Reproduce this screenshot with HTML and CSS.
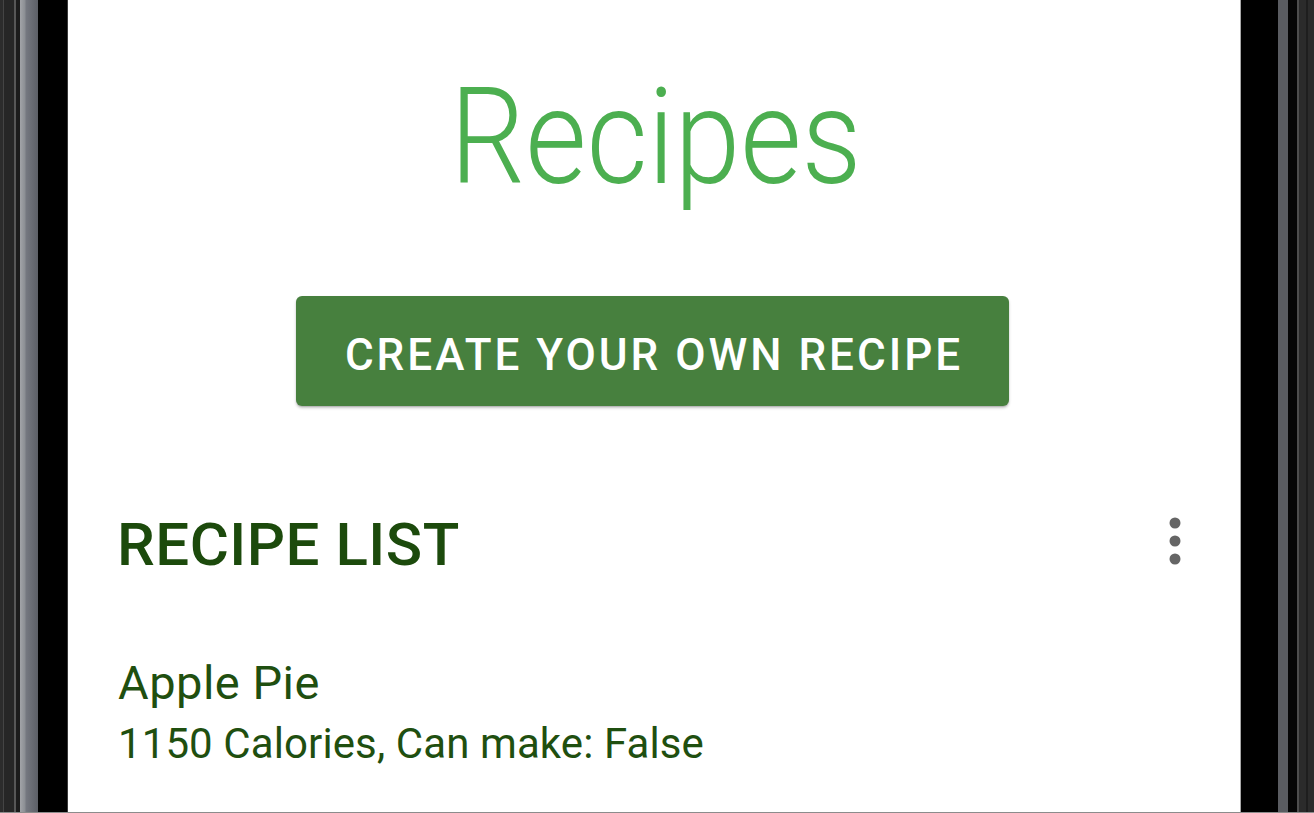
FILE: index.html
```html
<!DOCTYPE html>
<html lang="en">
<head>
<meta charset="utf-8">
<title>Recipes</title>
<link rel="stylesheet" href="styles.css">
</head>
<body>
<div class="device">
  <div class="bezel bezel-left"></div>
  <main class="screen">
    <h1 class="title">Recipes</h1>
    <div class="actions">
      <button class="create-btn" type="button">Create your own recipe</button>
    </div>
    <div class="list-header">
      <h2 class="list-title">RECIPE LIST</h2>
      <button class="menu-btn" type="button" aria-label="More options">
        <svg width="14" height="50" viewBox="0 0 14 50" aria-hidden="true">
          <circle cx="7" cy="7" r="5.5" fill="#656565"/>
          <circle cx="7" cy="25" r="5.5" fill="#656565"/>
          <circle cx="7" cy="43" r="5.5" fill="#656565"/>
        </svg>
      </button>
    </div>
    <ul class="recipe-list">
      <li class="recipe">
        <div class="recipe-name">Apple Pie</div>
        <div class="recipe-meta">1150 Calories, Can make: False</div>
      </li>
    </ul>
  </main>
  <div class="bezel bezel-right"></div>
</div>
</body>
</html>
```

FILE: styles.css
```css
* { box-sizing: border-box; }

html, body {
  margin: 0;
  padding: 0;
  background: #000;
}

body {
  width: 1314px;
  height: 813px;
  overflow: hidden;
  font-family: Roboto, "Noto Sans", "Liberation Sans", sans-serif;
}

.device {
  display: flex;
  height: 813px;
  border-bottom: 1px solid #8c8c8c;
}

.bezel { flex: none; height: 100%; }

.bezel-left {
  width: 68px;
  background: linear-gradient(to right,
    #2c2c2c 0, #2c2c2c 3px,
    #444 3px, #444 4px,
    #262626 4px, #262626 14px,
    #565656 14px, #565656 16px,
    #1b1b1b 16px, #1b1b1b 20px,
    #a2a4a8 20px, #8b8e93 25px,
    #757880 26px, #5c5f66 38px,
    #000 38px, #000 67px,
    #3a3a3a 67px, #3a3a3a 68px);
}

.bezel-right {
  width: 74px;
  background: linear-gradient(to right,
    #a8a8a8 0, #a8a8a8 1px,
    #000 1px, #000 38px,
    #5a5c61 38px, #5a5c61 48px,
    #060606 48px, #060606 57px,
    #4e4e4e 57px, #4e4e4e 59px,
    #2b2b2b 59px, #2b2b2b 66px,
    #1e1e1e 66px, #1e1e1e 68px,
    #2b2b2b 68px, #2b2b2b 74px);
}

.screen {
  flex: 1;
  background: #fff;
  padding-top: 59px;
  display: flex;
  flex-direction: column;
}

.title {
  margin: 0;
  padding-left: 4px;
  text-align: center;
  font-weight: 300;
  font-size: 134px;
  line-height: normal;
  color: #4caf50;
  letter-spacing: 0;
  transform: scaleX(0.885);
}

.actions {
  display: flex;
  justify-content: center;
  margin-top: 80px;
}

.create-btn {
  width: 713px;
  height: 110px;
  border: 0;
  border-radius: 6px;
  background: #47803e;
  color: #fff;
  font-family: Roboto, "Noto Sans", sans-serif;
  font-weight: 500;
  font-size: 44px;
  letter-spacing: 3px;
  text-transform: uppercase;
  box-shadow: 0 2px 3px rgba(0, 0, 0, 0.22), 0 1px 1px rgba(0, 0, 0, 0.12);
  padding: 7px 0 0 3px;
  margin-left: -3px;
}

.list-header {
  display: flex;
  align-items: center;
  justify-content: space-between;
  margin-top: 103px;
  padding: 0 48px 0 49px;
}

.list-title {
  margin: 0;
  font-weight: 500;
  font-size: 60px;
  line-height: normal;
  letter-spacing: 0.5px;
  color: #1c4a0c;
}

.menu-btn {
  border: 0;
  background: none;
  padding: 0 10px;
  display: flex;
  margin-top: -8px;
}

.recipe-list {
  list-style: none;
  margin: 76px 0 0;
  padding: 0 50px;
}

.recipe-name {
  font-size: 47px;
  line-height: 54px;
  letter-spacing: 0.5px;
  color: #1f4f10;
}

.recipe-meta {
  font-size: 42px;
  line-height: 49px;
  margin-top: 9px;
  color: #1f4f10;
  letter-spacing: 0.1px;
}
```
